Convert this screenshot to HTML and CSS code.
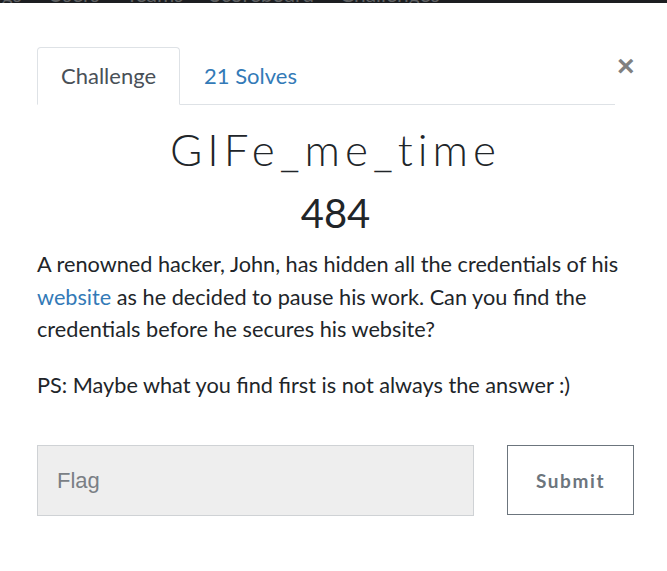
FILE: index.html
```html
<!DOCTYPE html>
<html>
<head>
<meta charset="utf-8">
<link rel="stylesheet" href="styles.css">
</head>
<body>
<div class="topnav">
  <div class="topnav-inner">
    <span class="n-logs">Logs</span><span>Users</span><span>Teams</span><span>Scoreboard</span><span>Challenges</span>
  </div>
</div>
<div class="modal">
  <div class="header">
    <ul class="tabs">
      <li class="tab active">Challenge</li>
      <li class="tab link">21 Solves</li>
    </ul>
    <button class="close" aria-label="Close">&times;</button>
  </div>
  <h2 class="title">GIFe_me_time</h2>
  <h3 class="value">484</h3>
  <div class="desc">
    <p>A renowned hacker, John, has hidden all the credentials of his <a href="#">website</a> as he decided to pause his work. Can you find the credentials before he secures his website?</p>
    <p>PS: Maybe what you find first is not always the answer :)</p>
  </div>
  <div class="form">
    <input class="flag" type="text" placeholder="Flag">
    <button class="submit">Submit</button>
  </div>
</div>
</body>
</html>
```
FILE: styles.css
```css
html, body {
  margin: 0;
  padding: 0;
  background: #fff;
}
body {
  font-family: Lato, "Liberation Sans", sans-serif;
  color: #212529;
}
.topnav {
  height: 3px;
  background: #1c1e21;
  overflow: hidden;
}
.topnav-inner {
  display: flex;
  gap: 26px;
  margin-top: -16px;
  margin-left: -20px;
  line-height: 20px;
  font-size: 21px;
  color: #5f6163;
  font-family: Lato, sans-serif;
}
.modal {
  padding: 44px 33px 0 37px;
}
.header {
  display: flex;
  align-items: flex-start;
}
.tabs {
  list-style: none;
  margin: 0;
  padding: 0;
  display: flex;
  flex: 1;
  border-bottom: 1px solid #dee2e6;
}
.tab {
  font-size: 22px;
  line-height: 30px;
  padding: 13px 23px 13px 23px;
  border: 1px solid transparent;
  border-top-left-radius: 4px;
  border-top-right-radius: 4px;
  margin-bottom: -1px;
}
.tab.active {
  color: #495057;
  border-color: #dee2e6 #dee2e6 #fff;
  background: #fff;
}
.tab.link {
  color: #337ab7;
}
.close {
  border: 0;
  background: none;
  padding: 0;
  margin: 4px 1px 0 2px;
  width: 16px;
  font-size: 30px;
  line-height: 30px;
  font-weight: 700;
  color: #808080;
  font-family: "Liberation Sans", sans-serif;
}
.title {
  margin: 18px 0 0;
  text-align: center;
  font-family: Lato, sans-serif;
  font-weight: 300;
  font-size: 44px;
  letter-spacing: 5px;
  line-height: 52px;
  color: #212529;
}
.value {
  margin: 14px 0 0;
  text-align: center;
  font-family: Lato, sans-serif;
  font-weight: 400;
  font-size: 40px;
  line-height: 48px;
  color: #212529;
}
.desc {
  margin-top: 11px;
  font-size: 21.7px;
  line-height: 32.5px;
  color: #212529;
}
.desc p {
  margin: 0 0 23px;
}
.desc a {
  color: #337ab7;
  text-decoration: none;
}
.form {
  display: flex;
  gap: 33px;
  margin-top: 44px;
}
.flag {
  flex: none;
  width: 437px;
  height: 71px;
  box-sizing: border-box;
  border: 1px solid #cfd2d5;
  background: #eeeeee;
  padding: 0 19px;
  font-family: "Liberation Sans", Arial, sans-serif;
  font-size: 22px;
  color: #495057;
  outline: none;
}
.flag::placeholder {
  color: #7a7f85;
}
.submit {
  flex: none;
  width: 127px;
  height: 70px;
  box-sizing: border-box;
  border: 1px solid #6c757d;
  background: #fff;
  color: #6c757d;
  font-family: Lato, sans-serif;
  font-weight: 700;
  font-size: 19px;
  letter-spacing: 1.6px;
}
```
